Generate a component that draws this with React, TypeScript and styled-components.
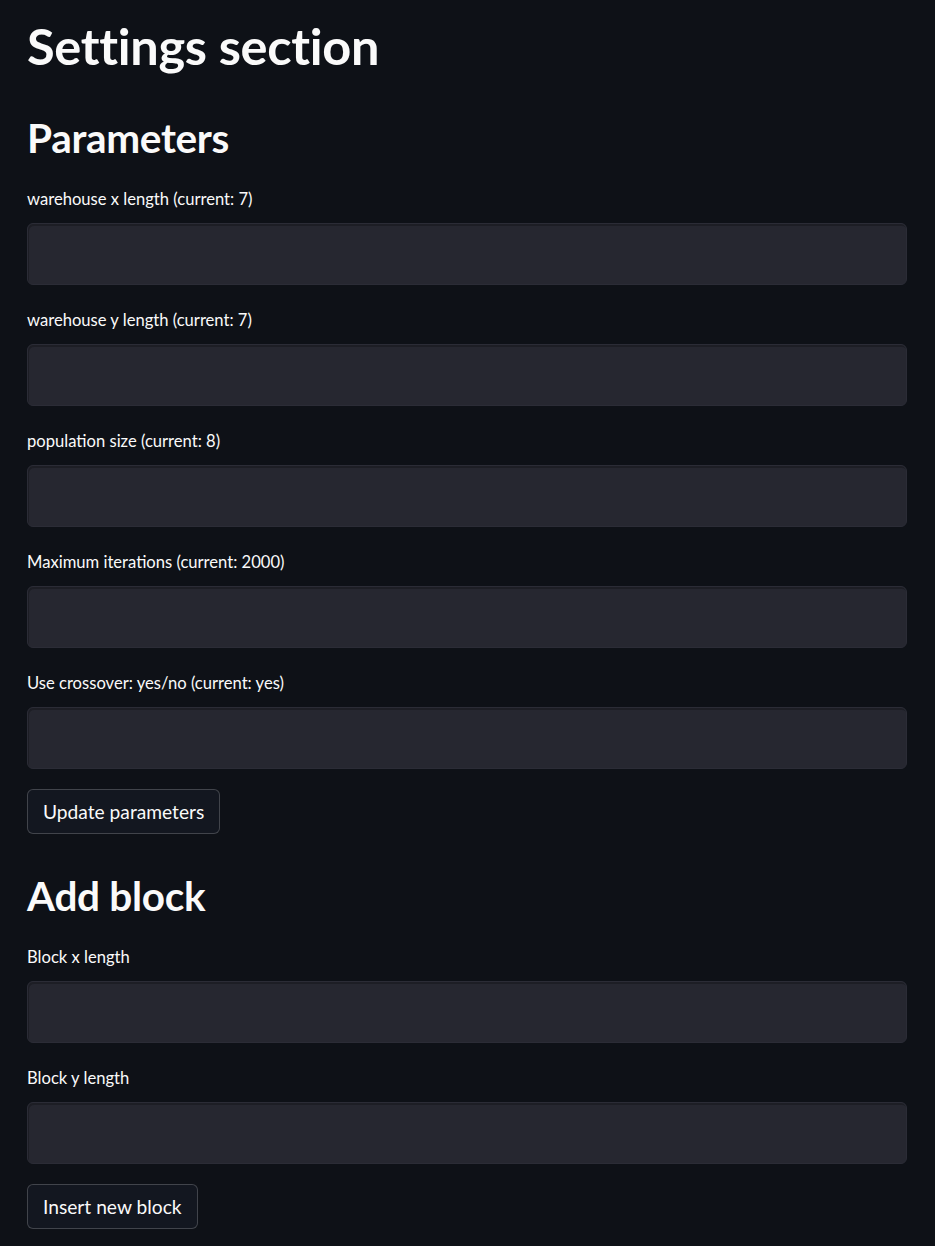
import React, { type FC } from 'react';
import styled, { createGlobalStyle } from 'styled-components';

const GlobalStyle = createGlobalStyle`
  html, body {
    margin: 0;
    padding: 0;
    background: #0e1117;
  }
  body {
    font-family: Lato, "Liberation Sans", sans-serif;
    color: #fafafa;
  }
`;

const Main = styled.main`
  padding: 0 28px 0 27px;
  display: flex;
  flex-direction: column;
`;

const Title = styled.h1`
  margin: 0;
  padding: 18px 0 0;
  height: 72px;
  font-size: 50.5px;
  line-height: 56px;
  font-weight: 700;
  letter-spacing: -0.3px;
`;

const SectionTitle = styled.h2<{ $top: number }>`
  margin: 0;
  padding-top: ${({ $top }) => $top}px;
  height: 75px;
  font-size: 40.5px;
  line-height: 48px;
  font-weight: 700;
  letter-spacing: -0.3px;
`;

const Field = styled.div`
  display: flex;
  flex-direction: column;
  gap: 14px;
  margin-bottom: 25px;
  &:last-of-type {
    margin-bottom: 20px;
  }
`;

const Label = styled.label`
  font-size: 16.6px;
  line-height: 20px;
  color: #fafafa;
`;

const Input = styled.input`
  box-sizing: border-box;
  width: 100%;
  height: 62px;
  margin: 0;
  padding: 0 12px;
  background: #262730;
  border: 1px solid #2b2c36;
  border-radius: 6px;
  box-shadow: inset 1px 2px 0 #1d1e25;
  color: #fafafa;
  font: inherit;
  outline: none;
`;

const Button = styled.button`
  align-self: flex-start;
  box-sizing: border-box;
  height: 45px;
  padding: 0 15px;
  background: #131720;
  border: 1px solid rgba(250, 250, 250, 0.2);
  border-radius: 6px;
  color: #fafafa;
  font-family: inherit;
  font-size: 19.2px;
  cursor: pointer;
`;

const TextField: FC<{ label: string }> = ({ label }) => (
  <Field>
    <Label>{label}</Label>
    <Input type="text" />
  </Field>
);

const Group = styled.section`
  display: flex;
  flex-direction: column;
`;

export default function App() {
  return (
    <>
      <GlobalStyle />
      <Main>
        <Title>Settings section</Title>
        <SectionTitle $top={24}>Parameters</SectionTitle>
        <Group>
          <TextField label="warehouse x length (current: 7)" />
          <TextField label="warehouse y length (current: 7)" />
          <TextField label="population size (current: 8)" />
          <TextField label="Maximum iterations (current: 2000)" />
          <TextField label="Use crossover: yes/no (current: yes)" />
          <Button>Update parameters</Button>
        </Group>
        <SectionTitle $top={38}>Add block</SectionTitle>
        <Group>
          <TextField label="Block x length" />
          <TextField label="Block y length" />
          <Button>Insert new block</Button>
        </Group>
      </Main>
    </>
  );
}
